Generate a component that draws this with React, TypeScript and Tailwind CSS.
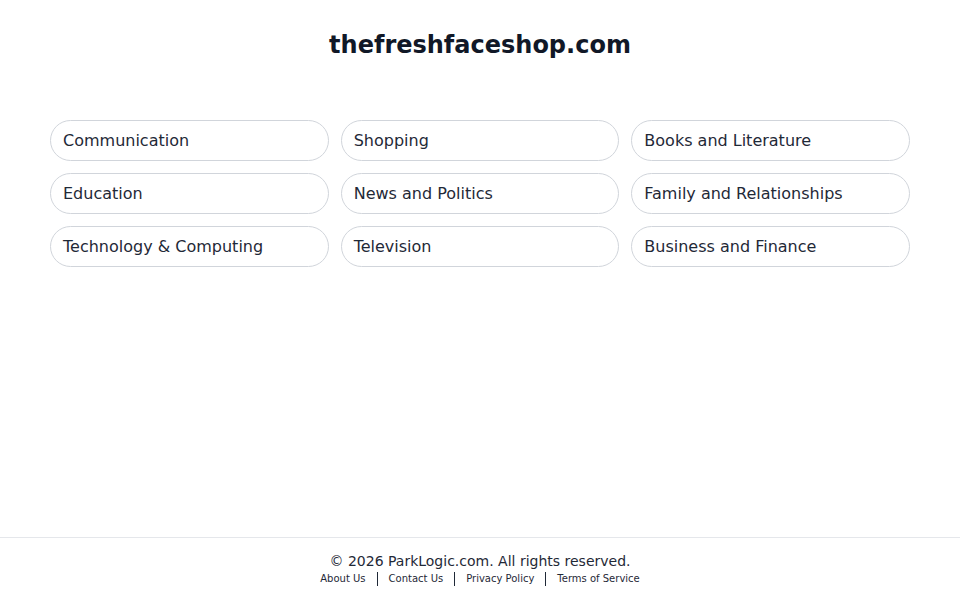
import React from "react";

const items = [
  "Communication",
  "Shopping",
  "Books and Literature",
  "Education",
  "News and Politics",
  "Family and Relationships",
  "Technology & Computing",
  "Television",
  "Business and Finance",
];

const links = ["About Us", "Contact Us", "Privacy Policy", "Terms of Service"];

export default function App() {
  return (
    <div
      className="min-h-screen flex flex-col bg-white"
      style={{ fontFamily: '"DejaVu Sans", sans-serif' }}
    >
      <main className="flex-1 px-[50px]">
        <h1 className="text-center text-[24px] leading-[32px] font-bold text-[#111827] pt-[29px]">
          thefreshfaceshop.com
        </h1>
        <div className="grid grid-cols-3 gap-x-[12px] gap-y-[12px] mt-[59px]">
          {items.map((t) => (
            <div
              key={t}
              className="h-[41px] flex items-center px-[12px] rounded-full border border-[#d1d5db] text-[16px] text-[#1f2937]"
            >
              {t}
            </div>
          ))}
        </div>
      </main>
      <footer className="border-t border-[#e5e7eb] pt-[13px] pb-[14px] text-center">
        <div className="text-[14px] leading-[20px] text-[#1f2937]">
          © 2026 ParkLogic.com. All rights reserved.
        </div>
        <div className="flex justify-center items-center text-[10px] leading-[14px] text-[#1f2937] mt-[1px]">
          {links.map((l, i) => (
            <React.Fragment key={l}>
              {i > 0 && <span className="w-px h-[14px] bg-[#1f2937] mx-[11px]" />}
              <a href="#" className="text-[#1f2937]">
                {l}
              </a>
            </React.Fragment>
          ))}
        </div>
      </footer>
    </div>
  );
}
